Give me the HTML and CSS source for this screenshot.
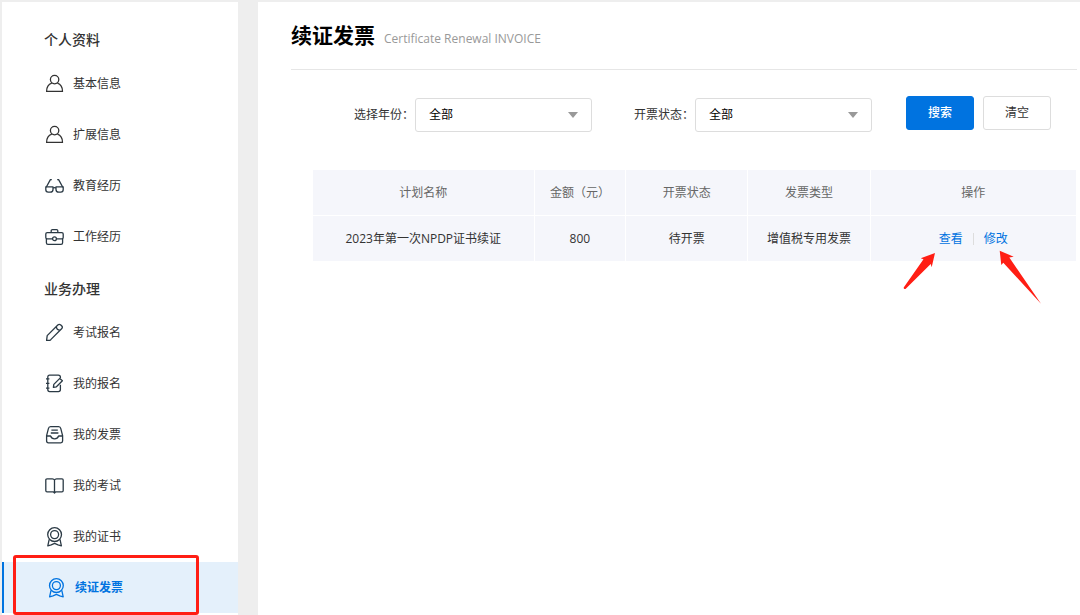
FILE: index.html
```html
<!DOCTYPE html>
<html lang="zh-CN">
<head>
    <meta charset="UTF-8">
    <meta name="viewport" content="width=device-width, initial-scale=1.0">
    <title>续证发票</title>
    <link rel="stylesheet" href="styles.css">
</head>
<body>
    <div class="layout">
        <nav class="sidebar">
            <h2 class="menu-title">个人资料</h2>
            <ul class="menu">
                <li><a class="menu-item" href="#">
                    <svg class="icon" viewBox="0 0 20 20"><circle cx="10.6" cy="5.6" r="4.2"/><path d="M7.8 9.2C4.4 10.4 2.6 13.2 2.6 17.4H18.5C18.5 13.2 16.8 10.4 13.4 9.2"/></svg>
                    <span>基本信息</span>
                </a></li>
                <li><a class="menu-item" href="#">
                    <svg class="icon" viewBox="0 0 20 20"><circle cx="10.6" cy="5.6" r="4.2"/><path d="M7.8 9.2C4.4 10.4 2.6 13.2 2.6 17.4H18.5C18.5 13.2 16.8 10.4 13.4 9.2"/></svg>
                    <span>扩展信息</span>
                </a></li>
                <li><a class="menu-item" href="#">
                    <svg class="icon icon-dark" viewBox="0 0 20 20"><path d="M7.8 3.6H6.4L2.2 11.2M13.2 3.6H14.6L18.8 11.2"/><path d="M1.8 10.8H9V13.4Q9 16.2 6.2 16.2H4.2Q1.8 16.2 1.8 13.6ZM12 10.8H19.2V13.6Q19.2 16.2 16.8 16.2H14.8Q12 16.2 12 13.4ZM9 12.2Q10.5 11 12 12.2"/></svg>
                    <span>教育经历</span>
                </a></li>
                <li><a class="menu-item" href="#">
                    <svg class="icon icon-dark" viewBox="0 0 20 20"><rect x="1.8" y="5.6" width="17.4" height="6.2" rx="1.4"/><path d="M7.2 5.4V3.8Q7.2 2.6 8.4 2.6H12.6Q13.8 2.6 13.8 3.8V5.4M2.4 11.8V15.8Q2.4 17.4 4 17.4H17Q18.6 17.4 18.6 15.8V11.8"/><circle class="icon-fill" cx="10.5" cy="11.8" r="1.9"/></svg>
                    <span>工作经历</span>
                </a></li>
            </ul>
            <h2 class="menu-title">业务办理</h2>
            <ul class="menu">
                <li><a class="menu-item" href="#">
                    <svg class="icon icon-dark" viewBox="0 0 20 20"><path d="M2.6 17.4L3.2 12.6L13.8 2Q15.2 0.8 16.8 2L17.8 3Q19 4.4 17.6 5.8L7 16.4L5.8 17.4ZM12.4 3.6C12.4 6 13.8 7.2 16 7.2"/></svg>
                    <span>考试报名</span>
                </a></li>
                <li><a class="menu-item" href="#">
                    <svg class="icon icon-dark" viewBox="0 0 20 20"><path d="M16.4 4V3.2Q16.4 1.2 14.4 1.2H5.6Q3.8 1.2 3.8 3.2V15.6Q3.8 17.6 5.6 17.6H14.4Q16.4 17.6 16.4 15.6V10.8M2 4.8H5.4M2 9.4H5.4M2 14.2H5.4"/><path d="M9.4 13.4L9.8 10.4L15.8 4.4L18.4 6.8L12.4 12.8Z"/></svg>
                    <span>我的报名</span>
                </a></li>
                <li><a class="menu-item" href="#">
                    <svg class="icon icon-dark" viewBox="0 0 20 20"><path d="M2.6 10.6L4.4 3.6Q4.8 1.6 6.6 1.6H14.6Q16.4 1.6 16.8 3.6L18.6 10.6V16Q18.6 17.8 16.8 17.8H4.4Q2.6 17.8 2.6 16ZM2.6 11H6.6Q7.6 13.8 10.6 13.8Q13.6 13.8 14.6 11H18.6M7.4 5.2H13.8M6.8 8H14.4"/></svg>
                    <span>我的发票</span>
                </a></li>
                <li><a class="menu-item" href="#">
                    <svg class="icon icon-dark" viewBox="0 0 20 20"><path d="M10.5 4Q9.9 2.8 8.4 2.8H3Q1.8 2.8 1.8 4V14.6Q1.8 15.8 3 15.8H9.2L10.5 17L11.8 15.8H18Q19.2 15.8 19.2 14.6V4Q19.2 2.8 18 2.8H12.6Q11.1 2.8 10.5 4V16.8"/></svg>
                    <span>我的考试</span>
                </a></li>
                <li><a class="menu-item" href="#">
                    <svg class="icon icon-dark" viewBox="0 0 20 20"><circle cx="10.6" cy="7.6" r="6.9"/><circle cx="10.6" cy="7.6" r="4"/><path d="M5.2 12.4L3.8 18.8L7.2 17.8L10.6 16.4L14 17.8L17.4 18.8L16 12.4"/></svg>
                    <span>我的证书</span>
                </a></li>
                <li><a class="menu-item active" href="#">
                    <svg class="icon" viewBox="0 0 20 20"><circle cx="10.4" cy="7.6" r="6.9"/><circle cx="10.4" cy="7.6" r="4"/><path d="M5 12.4L3.6 18.8L7 17.8L10.4 16.4L13.8 17.8L17.2 18.8L15.8 12.4"/></svg>
                    <span>续证发票</span>
                </a></li>
            </ul>
        </nav>

        <main class="content">
            <header class="page-header">
                <h1>续证发票</h1>
                <span class="subtitle">Certificate Renewal INVOICE</span>
            </header>

            <form class="filters">
                <div class="field">
                    <label for="year">选择年份：</label>
                    <div class="select-box">
                        <select id="year"><option>全部</option></select>
                    </div>
                </div>
                <div class="field">
                    <label for="status">开票状态：</label>
                    <div class="select-box">
                        <select id="status"><option>全部</option></select>
                    </div>
                </div>
                <div class="buttons">
                    <button type="button" class="btn btn-primary">搜索</button>
                    <button type="reset" class="btn">清空</button>
                </div>
            </form>

            <div class="table-wrap">
                <table>
                    <thead>
                        <tr>
                            <th class="col-name">计划名称</th>
                            <th class="col-amount">金额（元）</th>
                            <th class="col-status">开票状态</th>
                            <th class="col-type">发票类型</th>
                            <th>操作</th>
                        </tr>
                    </thead>
                    <tbody>
                        <tr>
                            <td>2023年第一次NPDP证书续证</td>
                            <td>800</td>
                            <td>待开票</td>
                            <td>增值税专用发票</td>
                            <td>
                                <div class="actions">
                                    <a href="#">查看</a>
                                    <span class="divider"></span>
                                    <a href="#">修改</a>
                                    <svg class="arrows" viewBox="0 0 142 58">
                                        <path d="M34 5L19.7 10.3L22.5 11.2L2.7 39.5Q2.5 41.5 4.5 41L29.7 16L30.7 19.3Z"/>
                                        <path d="M98.7 2.7L112.7 8.7L108.3 9.5L140 55.7L102.3 14.7L100.3 17Z"/>
                                    </svg>
                                </div>
                            </td>
                        </tr>
                    </tbody>
                </table>
            </div>
        </main>
    </div>
</body>
</html>
```
FILE: styles.css
```css
*,
*::after {
    box-sizing: border-box;
}
body {
    margin: 0;
    background: #eee;
    color: #333;
    font-family: "Open Sans", "Noto Sans CJK SC", sans-serif;
    font-size: 12px;
    line-height: 20px;
}
a {
    color: #0073e0;
    text-decoration: none;
}
.layout {
    display: flex;
    gap: 20px;
    min-height: 100vh;
    padding: 2px 0 0 2px;
}

/* sidebar */
.sidebar {
    flex: 0 0 236px;
    padding-top: 11px;
    background: #fff;
}
.menu-title {
    margin: 0;
    padding: 17px 0 8px 42px;
    font-size: 14px;
    font-weight: 500;
    line-height: 20px;
}
.menu {
    margin: 0;
    padding: 0;
    list-style: none;
}
.menu-item {
    position: relative;
    display: flex;
    align-items: center;
    gap: 9px;
    height: 51px;
    padding-left: 42px;
    color: #333;
}
.menu-item.active {
    border-left: 2px solid #0073e0;
    background: #e4f0fb;
    color: #0073e0;
    font-weight: bold;
}
.menu-item.active::after {
    content: "";
    position: absolute;
    top: -7px;
    left: 9px;
    width: 186px;
    height: 60px;
    border: 3px solid #ff1e14;
    border-radius: 3px;
}
.icon {
    width: 20px;
    height: 20px;
    fill: none;
    stroke: currentColor;
    stroke-width: 1.3;
    stroke-linejoin: round;
}
.icon-dark {
    color: #2b3a45;
}
.icon-fill {
    fill: #fff;
}

/* content */
.content {
    flex: 1;
    padding: 0 3px 0 33px;
    background: #fff;
}
.page-header {
    display: flex;
    align-items: baseline;
    gap: 9px;
    height: 68px;
    padding-top: 18px;
    border-bottom: 1px solid #e6e6e6;
}
.page-header h1 {
    margin: 0;
    color: #000;
    font-size: 21px;
    line-height: 30px;
}
.subtitle {
    color: #999;
    font-size: 12px;
}
.filters {
    display: flex;
    padding: 26px 26px 0 63px;
}
.field {
    display: flex;
    flex: 1;
    align-items: center;
    gap: 1px;
    margin-top: 2px;
}
.field + .field {
    margin-left: 42px;
}
.select-box {
    position: relative;
    flex: 1;
}
.select-box::after {
    content: "";
    position: absolute;
    top: 14px;
    right: 14px;
    border: 5px solid transparent;
    border-top: 6px solid #999;
    border-bottom: 0;
    pointer-events: none;
}
select {
    width: 100%;
    height: 34px;
    padding: 0 13px;
    border: 1px solid #ddd;
    border-radius: 3px;
    background: #fff;
    color: #000;
    font: inherit;
    appearance: none;
}
.buttons {
    display: flex;
    gap: 9px;
    margin-left: 34px;
}
.btn {
    width: 68px;
    height: 34px;
    padding: 0;
    border: 1px solid #ddd;
    border-radius: 3px;
    background: #fff;
    color: #333;
    font: inherit;
    cursor: pointer;
}
.btn-primary {
    border-color: #0073e0;
    background: #0073e0;
    color: #fff;
    font-weight: 500;
}

/* table */
.table-wrap {
    padding: 38px 0 0 22px;
}
table {
    width: 100%;
    border-spacing: 0;
    table-layout: fixed;
}
th,
td {
    height: 46px;
    padding: 0;
    border: solid #fff;
    border-width: 0 1px 1px 0;
    background: #f5f6fb;
    font-weight: normal;
    text-align: center;
}
th {
    color: #666;
}
.col-name {
    width: 29%;
}
.col-amount {
    width: 12%;
}
.col-status,
.col-type {
    width: 16%;
}
.actions {
    position: relative;
    display: inline-flex;
    align-items: center;
    gap: 10px;
}
.divider {
    width: 1px;
    height: 12px;
    background: #ddd;
}
.arrows {
    position: absolute;
    top: 19px;
    left: -38px;
    width: 142px;
    height: 58px;
    fill: #ff1e14;
    pointer-events: none;
}
```
